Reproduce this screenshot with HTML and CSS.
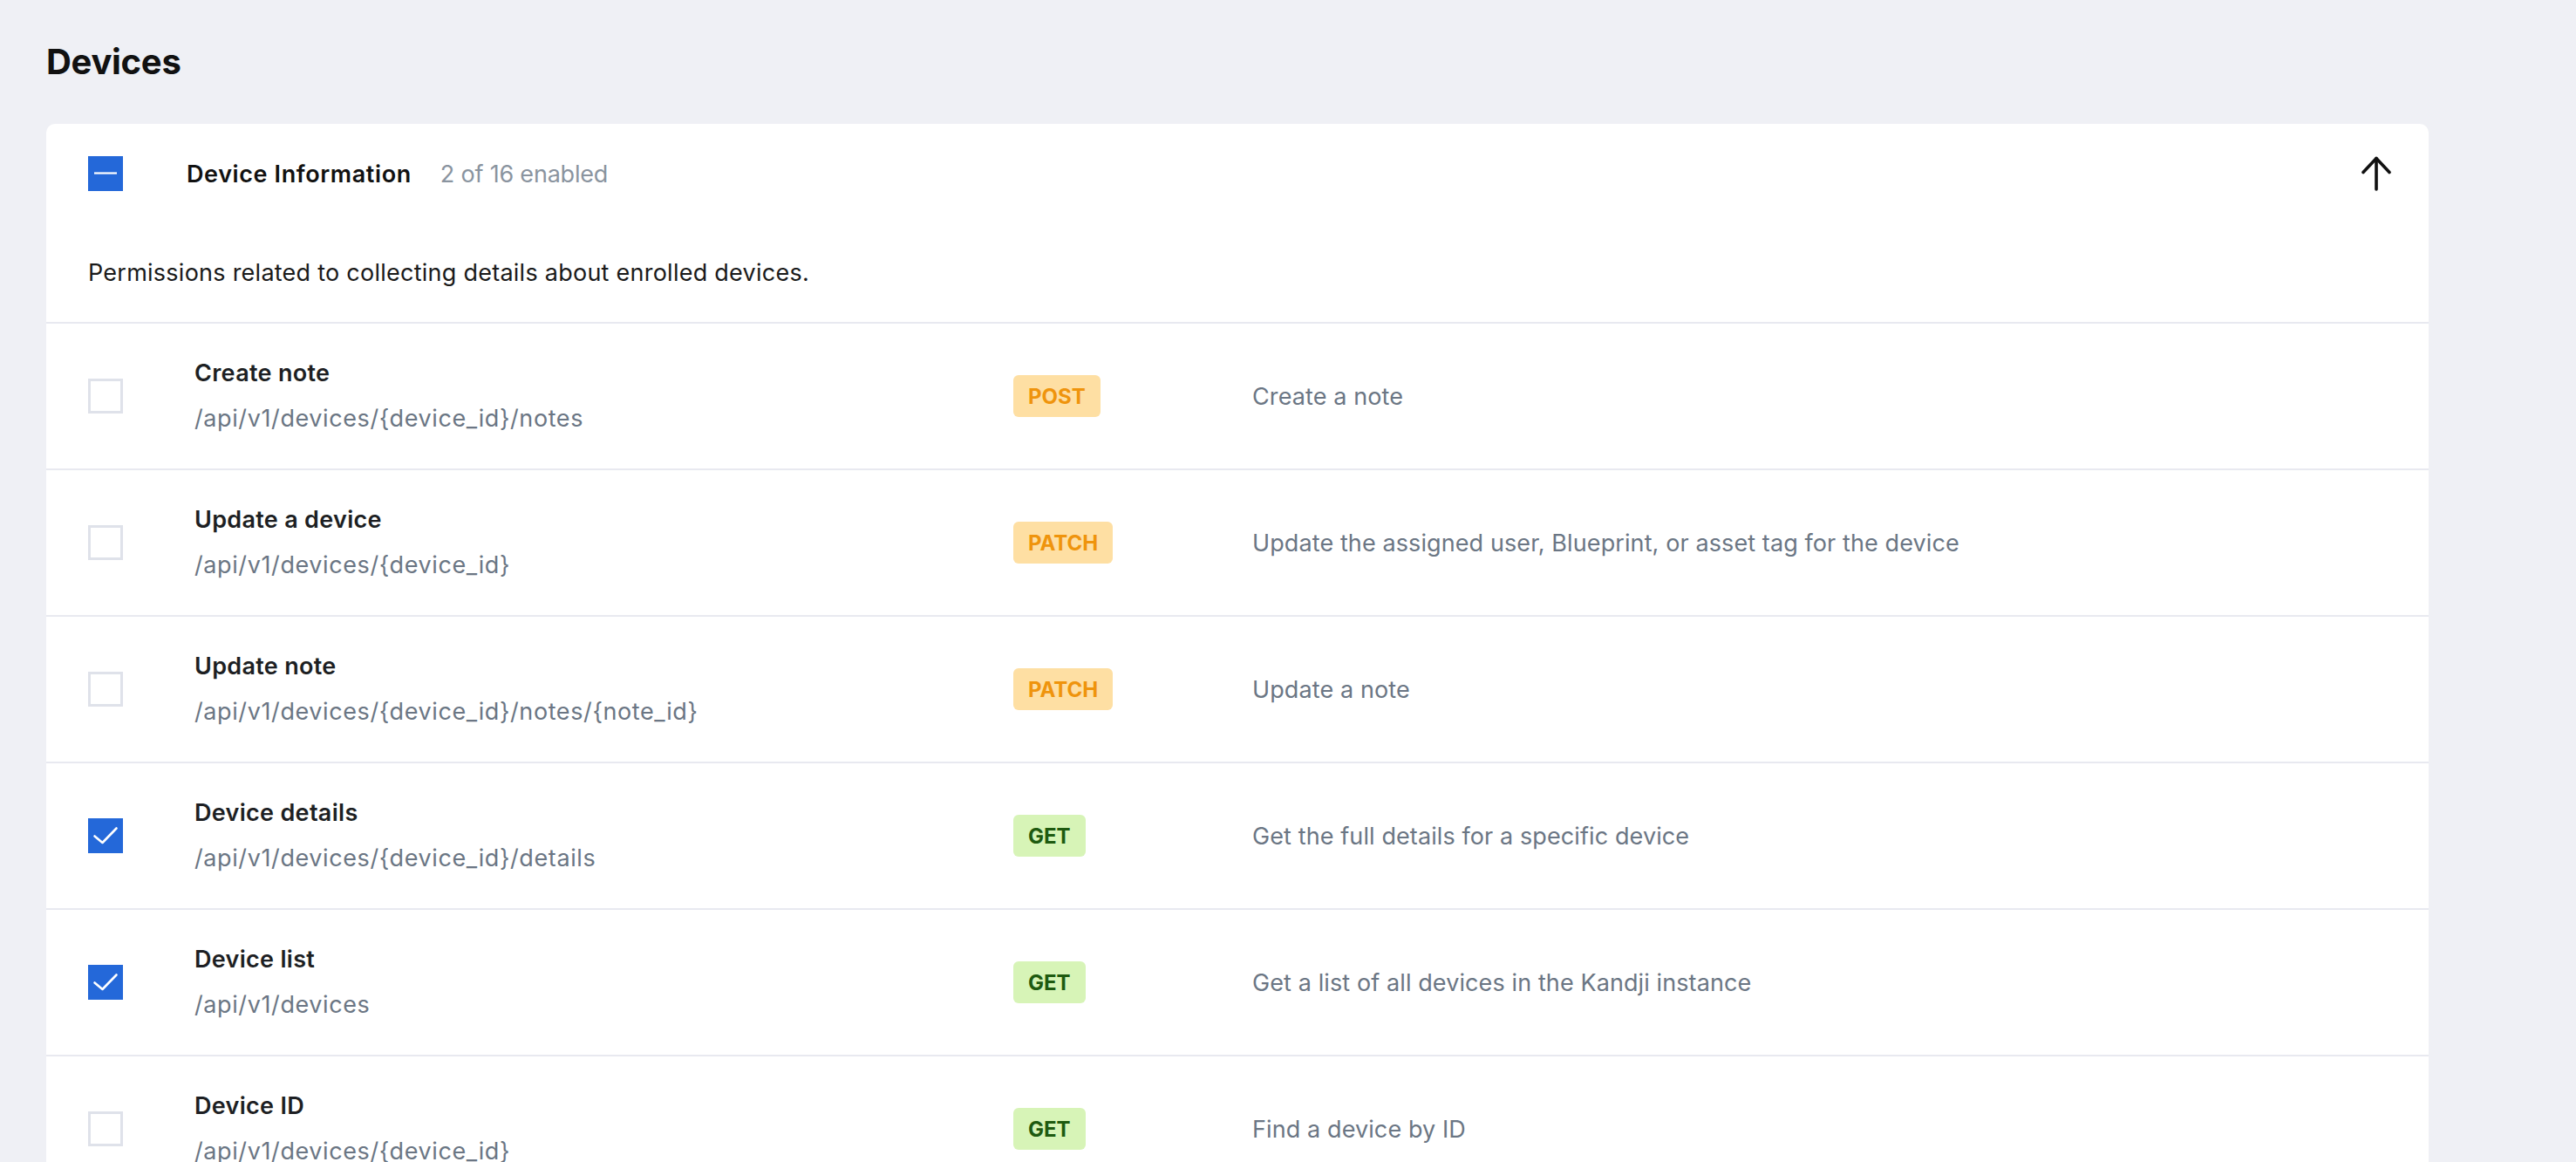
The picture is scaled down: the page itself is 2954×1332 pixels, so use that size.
FILE: index.html
```html
<!DOCTYPE html>
<html lang="en">
<head>
  <meta charset="UTF-8" />
  <meta name="viewport" content="width=device-width, initial-scale=1.0"/>
  <title>Devices - API Permissions</title>
  <link rel="stylesheet" href="styles.css">
</head>
<body>

  <div class="page">
    <h1>Devices</h1>

    <div class="perm-card">
      <div class="perm-head">
        <div class="head-row">
          <span class="box box-on">
            <svg width="40" height="40" viewBox="0 0 40 40"><path d="M7 19.5H33" stroke="#fff" stroke-width="2.2"/></svg>
          </span>
          <span class="group-name">Device Information</span>
          <span class="group-count">2 of 16 enabled</span>
          <svg class="collapse" width="40" height="40" viewBox="0 0 40 40" fill="none" stroke="#111" stroke-width="3.6" stroke-linecap="round" stroke-linejoin="round">
            <path d="M20 38V2.5"/>
            <path d="M5 18.5L20 2.5L35 18.5"/>
          </svg>
        </div>
        <p class="group-desc">Permissions related to collecting details about enrolled devices.</p>
      </div>

      <div class="perm-row">
        <span class="box"></span>
        <div class="endpoint">
          <div class="ep-name">Create note</div>
          <div class="ep-path">/api/v1/devices/{device_id}/notes</div>
        </div>
        <div class="method"><span class="tag tag-write">POST</span></div>
        <div class="ep-desc">Create a note</div>
      </div>

      <div class="perm-row">
        <span class="box"></span>
        <div class="endpoint">
          <div class="ep-name">Update a device</div>
          <div class="ep-path">/api/v1/devices/{device_id}</div>
        </div>
        <div class="method"><span class="tag tag-write">PATCH</span></div>
        <div class="ep-desc">Update the assigned user, Blueprint, or asset tag for the device</div>
      </div>

      <div class="perm-row">
        <span class="box"></span>
        <div class="endpoint">
          <div class="ep-name">Update note</div>
          <div class="ep-path">/api/v1/devices/{device_id}/notes/{note_id}</div>
        </div>
        <div class="method"><span class="tag tag-write">PATCH</span></div>
        <div class="ep-desc">Update a note</div>
      </div>

      <div class="perm-row">
        <span class="box box-on">
          <svg width="40" height="40" viewBox="0 0 40 40" fill="none" stroke="#fff" stroke-width="2.6" stroke-linecap="round" stroke-linejoin="round"><path d="M7.5 20.5L16.5 28L32.5 11.5"/></svg>
        </span>
        <div class="endpoint">
          <div class="ep-name">Device details</div>
          <div class="ep-path">/api/v1/devices/{device_id}/details</div>
        </div>
        <div class="method"><span class="tag tag-read">GET</span></div>
        <div class="ep-desc">Get the full details for a specific device</div>
      </div>

      <div class="perm-row">
        <span class="box box-on">
          <svg width="40" height="40" viewBox="0 0 40 40" fill="none" stroke="#fff" stroke-width="2.6" stroke-linecap="round" stroke-linejoin="round"><path d="M7.5 20.5L16.5 28L32.5 11.5"/></svg>
        </span>
        <div class="endpoint">
          <div class="ep-name">Device list</div>
          <div class="ep-path">/api/v1/devices</div>
        </div>
        <div class="method"><span class="tag tag-read">GET</span></div>
        <div class="ep-desc">Get a list of all devices in the Kandji instance</div>
      </div>

      <div class="perm-row">
        <span class="box"></span>
        <div class="endpoint">
          <div class="ep-name">Device ID</div>
          <div class="ep-path">/api/v1/devices/{device_id}</div>
        </div>
        <div class="method"><span class="tag tag-read">GET</span></div>
        <div class="ep-desc">Find a device by ID</div>
      </div>
    </div>
  </div>

</body>
</html>
```

FILE: styles.css
```css
html, body {
  height: 100%;
  overflow: hidden;
}

body {
  margin: 0;
  font-family: Inter, 'Noto Sans', sans-serif;
  background: #eff0f5;
  color: #1d1f23;
}

.page {
  width: 2732px;
  padding: 47px 0 0 53px;
}

h1 {
  margin: 0 0 47px 0;
  font-size: 40px;
  line-height: 48px;
  font-weight: 700;
  color: #111;
  letter-spacing: -0.3px;
}

.perm-card {
  background: #fff;
  border-radius: 10px;
}

.perm-head {
  padding: 37px 40px 38px 48px;
}

.head-row {
  display: flex;
  align-items: center;
  height: 40px;
}

.group-name {
  margin-left: 73px;
  font-size: 27px;
  font-weight: 600;
  color: #111;
  letter-spacing: 0.6px;
}

.group-count {
  margin-left: 33px;
  font-size: 27px;
  color: #8a949f;
  letter-spacing: -0.2px;
}

.collapse {
  margin-left: auto;
}

.group-desc {
  margin: 76px 0 0 0;
  font-size: 27px;
  line-height: 36px;
  color: #1a1a1a;
  letter-spacing: 0.25px;
}

/* checkbox */
.box {
  flex: none;
  width: 40px;
  height: 40px;
  box-sizing: border-box;
  border: 3px solid #dfe2ea;
  background: #fff;
}

.box-on {
  border: none;
  background: #2468d9;
}

.box svg {
  display: block;
}

.perm-row {
  display: flex;
  align-items: center;
  height: 166px;
  padding: 0 48px;
  border-top: 2px solid #e8e9f0;
}

.endpoint {
  margin-left: 82px;
  width: 939px;
}

.ep-name {
  font-size: 27px;
  line-height: 36px;
  font-weight: 600;
  letter-spacing: 0.3px;
}

.ep-path {
  margin-top: 16px;
  font-size: 27px;
  line-height: 36px;
  color: #6b7684;
  letter-spacing: 0.6px;
}

.method {
  width: 274px;
}

.tag {
  display: inline-flex;
  align-items: center;
  height: 48px;
  padding: 0 17px;
  border-radius: 6px;
  font-size: 24px;
  font-weight: 700;
}

.tag-write {
  background: #fedfa3;
  color: #ef940d;
}

.tag-read {
  background: #d7f4b7;
  color: #1e5a10;
}

.ep-desc {
  font-size: 27px;
  color: #6b7684;
  letter-spacing: 0.1px;
}
```
